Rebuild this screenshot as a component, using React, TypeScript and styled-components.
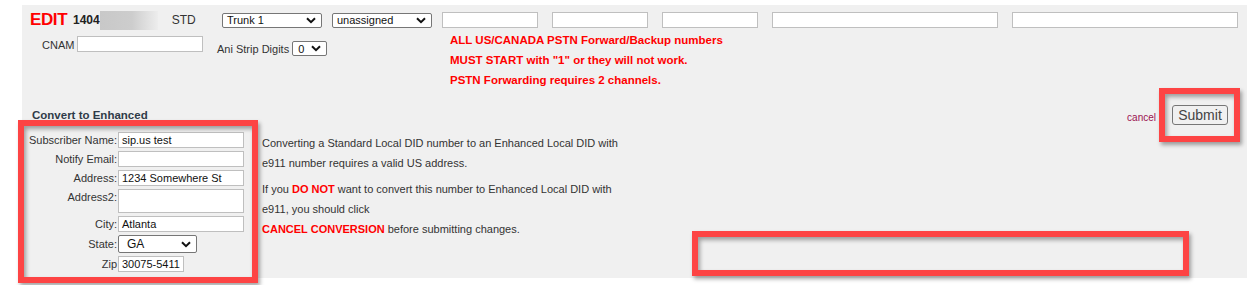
import React from 'react';
import styled, { createGlobalStyle } from 'styled-components';

const GlobalStyle = createGlobalStyle`
  html, body {
    margin: 0;
    padding: 0;
    background: #ffffff;
    overflow: hidden;
  }
  body {
    font-family: "Liberation Sans", Arial, sans-serif;
    font-size: 11px;
    color: #333;
  }
`;

const Page = styled.div`
  padding: 5px 0 0 22px;
  width: 1247px;
  height: 285px;
  box-sizing: border-box;
`;

const Panel = styled.div`
  position: relative;
  width: 1225px;
  height: 273px;
  background: #f0f0f0;
`;

const TopRow = styled.div`
  display: flex;
  align-items: center;
  height: 16px;
  padding: 7px 0 0 8px;
`;

const Lead = styled.div`
  display: flex;
  align-items: center;
  width: 192px;
  flex-shrink: 0;
`;

const EditTitle = styled.span`
  font-size: 17px;
  font-weight: bold;
  letter-spacing: -0.4px;
  color: #ff0000;
  width: 43px;
  flex-shrink: 0;
`;

const DidNumber = styled.span`
  font-size: 12px;
  font-weight: bold;
  color: #222;
`;

const Blurred = styled.span`
  display: inline-block;
  width: 58px;
  height: 19px;
  margin-right: 14px;
  flex-shrink: 0;
  background: linear-gradient(90deg, #c8c8c8 0%, #cdcdcd 55%, #ededed 100%);
`;

const TypeLabel = styled.span`
  font-size: 12px;
  color: #333;
`;

const Select = styled.div<{ $w: number; $h?: number; $fs?: number; $pl?: number; $ml?: number }>`
  width: ${({ $w }) => $w}px;
  height: ${({ $h }) => $h ?? 15}px;
  margin-left: ${({ $ml }) => $ml ?? 0}px;
  box-sizing: border-box;
  border: 1px solid #767676;
  border-radius: 2px;
  background: #fff;
  display: flex;
  align-items: center;
  justify-content: space-between;
  padding: 0 5px 0 ${({ $pl }) => $pl ?? 4}px;
  font-size: ${({ $fs }) => $fs ?? 11}px;
  color: #111;
  flex-shrink: 0;
`;

const Chevron = () => (
  <svg width="10" height="7" viewBox="0 0 10 7">
    <path d="M1 1.2 L5 5.2 L9 1.2" fill="none" stroke="#111" strokeWidth="2" />
  </svg>
);

const Input = styled.div<{ $w: number; $h?: number; $ml?: number }>`
  width: ${({ $w }) => $w}px;
  height: ${({ $h }) => $h ?? 16}px;
  margin-left: ${({ $ml }) => $ml ?? 0}px;
  box-sizing: border-box;
  border: 1px solid #bfbfbf;
  background: #fff;
  flex-shrink: 0;
  font-size: 11px;
  color: #111;
  padding: 0 3px;
  display: flex;
  align-items: center;
  white-space: nowrap;
  overflow: hidden;
`;

const SecondRow = styled.div`
  display: flex;
  align-items: flex-start;
  height: 80px;
`;

const SecondLeft = styled.div`
  display: flex;
  align-items: flex-start;
  width: 428px;
  flex-shrink: 0;
  padding: 8px 0 0 20px;
  box-sizing: border-box;
`;

const CnamLabel = styled.span`
  width: 35px;
  line-height: 16px;
  margin-top: 1px;
  color: #333;
`;

const AniGroup = styled.div`
  display: flex;
  align-items: center;
  gap: 3px;
  margin: 5px 0 0 14px;
  white-space: nowrap;
`;

const Notes = styled.div`
  padding-top: 2px;
  font-size: 11.5px;
  font-weight: bold;
  color: #ff0000;
  line-height: 20px;
`;

const SectionHeader = styled.div`
  display: flex;
  align-items: center;
  height: 14px;
  padding-left: 10px;
  padding-right: 19px;
`;

const SectionTitle = styled.span`
  font-size: 11.5px;
  font-weight: bold;
  color: #2f3b48;
  line-height: 14px;
`;

const Actions = styled.div`
  margin-left: auto;
  display: flex;
  align-items: flex-end;
  gap: 16px;
`;

const CancelLink = styled.a`
  font-size: 10px;
  line-height: 12px;
  color: #9c1050;
  text-decoration: none;
  margin-bottom: 1px;
`;

const SubmitButton = styled.button`
  width: 56px;
  height: 20px;
  padding: 0;
  font-family: "Liberation Sans", Arial, sans-serif;
  font-size: 14px;
  color: #444;
  background: #f0f0f0;
  border: 1px solid #767676;
  border-radius: 3px;
`;

const Body = styled.div`
  display: flex;
  align-items: flex-start;
`;

const FormTable = styled.div`
  display: grid;
  grid-template-columns: 92px auto;
  column-gap: 1px;
  row-gap: 3px;
  align-items: center;
  padding: 10px 0 0 3px;
  width: 222px;
  box-sizing: border-box;
  flex-shrink: 0;
`;

const FormLabel = styled.span<{ $top?: boolean }>`
  text-align: right;
  color: #333;
  white-space: nowrap;
  align-self: ${({ $top }) => ($top ? 'start' : 'center')};
  margin-top: ${({ $top }) => ($top ? 2 : 0)}px;
`;

const Explain = styled.div`
  padding: 11px 0 0 18px;
  width: 420px;
  color: #333;
  line-height: 20px;
`;

const Para = styled.p`
  margin: 0 0 6px 0;
`;

const Warn = styled.span`
  color: #ff0000;
  font-weight: bold;
`;

const Highlight = styled.div<{ $l: number; $t: number; $w: number; $h: number }>`
  position: absolute;
  left: ${({ $l }) => $l}px;
  top: ${({ $t }) => $t}px;
  width: ${({ $w }) => $w}px;
  height: ${({ $h }) => $h}px;
  box-sizing: border-box;
  border: 6px solid #fd4444;
  box-shadow: 2px 3px 4px rgba(0, 0, 0, 0.35), inset 2px 3px 4px rgba(0, 0, 0, 0.35);
  pointer-events: none;
`;

export default function App() {
  return (
    <>
      <GlobalStyle />
      <Page>
        <Panel>
          <TopRow>
            <Lead>
              <EditTitle>EDIT</EditTitle>
              <DidNumber>1404</DidNumber>
              <Blurred />
              <TypeLabel>STD</TypeLabel>
            </Lead>
            <Select $w={100}>Trunk 1<Chevron /></Select>
            <Select $w={100} $ml={10}>unassigned<Chevron /></Select>
            <Input $w={96} $ml={10} />
            <Input $w={96} $ml={14} />
            <Input $w={96} $ml={14} />
            <Input $w={226} $ml={14} />
            <Input $w={226} $ml={14} />
          </TopRow>
          <SecondRow>
            <SecondLeft>
              <CnamLabel>CNAM</CnamLabel>
              <Input $w={126} />
              <AniGroup>
                <span>Ani Strip Digits</span>
                <Select $w={35} $pl={5}>0<Chevron /></Select>
              </AniGroup>
            </SecondLeft>
            <Notes>
              ALL US/CANADA PSTN Forward/Backup numbers
              <br />
              MUST START with "1" or they will not work.
              <br />
              PSTN Forwarding requires 2 channels.
            </Notes>
          </SecondRow>
          <SectionHeader>
            <SectionTitle>Convert to Enhanced</SectionTitle>
            <Actions>
              <CancelLink href="#">cancel</CancelLink>
              <SubmitButton>Submit</SubmitButton>
            </Actions>
          </SectionHeader>
          <Body>
            <FormTable>
              <FormLabel>Subscriber Name:</FormLabel>
              <Input $w={126}>sip.us test</Input>
              <FormLabel>Notify Email:</FormLabel>
              <Input $w={126} />
              <FormLabel>Address:</FormLabel>
              <Input $w={126}>1234 Somewhere St</Input>
              <FormLabel $top>Address2:</FormLabel>
              <Input $w={126} $h={24} />
              <FormLabel>City:</FormLabel>
              <Input $w={126}>Atlanta</Input>
              <FormLabel>State:</FormLabel>
              <Select $w={79} $h={18} $fs={12} $pl={8}>GA<Chevron /></Select>
              <FormLabel>Zip</FormLabel>
              <Input $w={66}>30075-5411</Input>
            </FormTable>
            <Explain>
              <Para>
                Converting a Standard Local DID number to an Enhanced Local DID with
                <br />
                e911 number requires a valid US address.
              </Para>
              <Para>
                If you <Warn>DO NOT</Warn> want to convert this number to Enhanced Local DID with
                <br />
                e911, you should click
                <br />
                <Warn>CANCEL CONVERSION</Warn> before submitting changes.
              </Para>
            </Explain>
          </Body>
          <Highlight $l={-4} $t={115} $w={240} $h={163} />
          <Highlight $l={1137} $t={83} $w={81} $h={54} />
          <Highlight $l={670} $t={226} $w={497} $h={45} />
        </Panel>
      </Page>
    </>
  );
}
